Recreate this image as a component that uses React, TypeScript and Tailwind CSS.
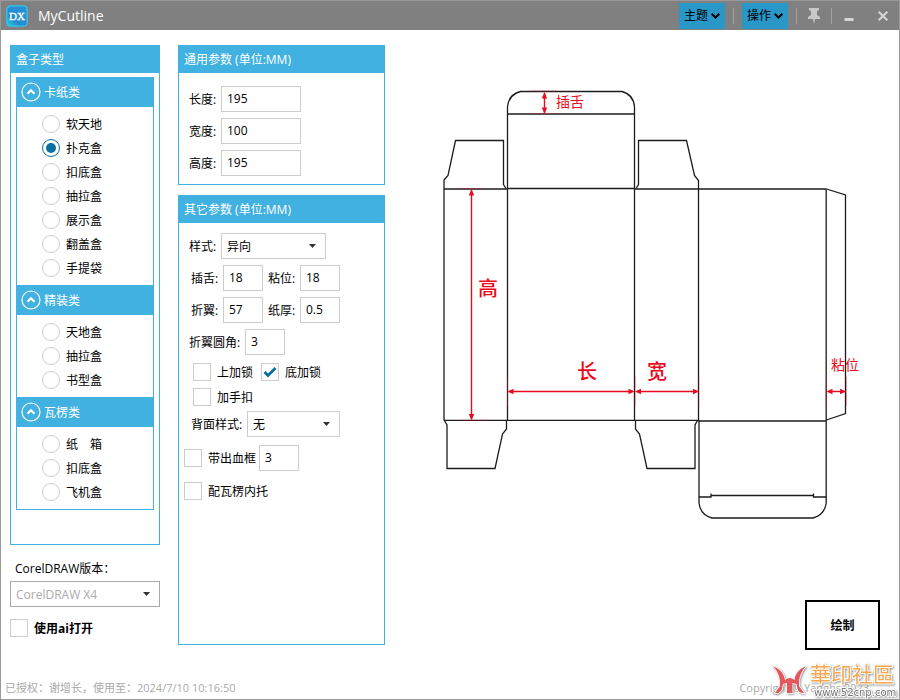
import { useState, type ReactNode } from "react";

const groups = [
  { name: "卡纸类", items: ["软天地", "扑克盒", "扣底盒", "抽拉盒", "展示盒", "翻盖盒", "手提袋"] },
  { name: "精装类", items: ["天地盒", "抽拉盒", "书型盒"] },
  { name: "瓦楞类", items: ["纸　箱", "扣底盒", "飞机盒"] },
];

function Panel({ title, className = "", children }: { title: string; className?: string; children: ReactNode }) {
  return (
    <section className={`border border-[#41b1e1] ${className}`}>
      <h2 className="-mx-px -mt-px flex h-7 items-center bg-[#41b1e1] px-1.5 pt-0.5 text-white">{title}</h2>
      {children}
    </section>
  );
}

function Field({ id, label, value, labelWidth = "w-8", width = "w-10" }: { id: string; label: string; value: string; labelWidth?: string; width?: string }) {
  return (
    <div className="flex items-center">
      <label htmlFor={id} className={`shrink-0 pt-0.5 whitespace-nowrap ${labelWidth}`}>{label}</label>
      <input id={id} defaultValue={value} className={`h-[26px] border border-[#ccc] px-[5px] pb-0.5 outline-none ${width}`} />
    </div>
  );
}

function Select({ id, options, className = "" }: { id: string; options: string[]; className?: string }) {
  return (
    <div className={`grid h-[26px] items-center ${className}`}>
      <select id={id} className="col-start-1 row-start-1 h-[26px] w-full appearance-none border border-inherit bg-white px-[5px] pt-0.5 outline-none">
        {options.map((o) => <option key={o}>{o}</option>)}
      </select>
      <svg className="pointer-events-none col-start-1 row-start-1 mr-2.5 justify-self-end" width="7" height="4" viewBox="0 0 7 4">
        <path d="M0 0H7L3.5 4Z" fill="#333" />
      </svg>
    </div>
  );
}

function Check({ label, checked = false, bold = false }: { label: string; checked?: boolean; bold?: boolean }) {
  return (
    <label className={`flex items-center gap-1.5 whitespace-nowrap ${bold ? "font-bold" : ""}`}>
      <span className="grid">
        <input type="checkbox" defaultChecked={checked} className="peer col-start-1 row-start-1 size-[18px] appearance-none border border-[#ccc] bg-white" />
        <svg className="pointer-events-none invisible col-start-1 row-start-1 peer-checked:visible" width="18" height="18" viewBox="0 0 18 18">
          <path d="M3.5 9L7 12.500L14.500 5" fill="none" stroke="#086f9e" strokeWidth="2.800" />
        </svg>
      </span>
      <span className="pt-0.5">{label}</span>
    </label>
  );
}

function BoxGroup({ name, items }: { name: string; items: string[] }) {
  const [open, setOpen] = useState(true);
  return (
    <div>
      <button type="button" onClick={() => setOpen(!open)} className="flex h-[30px] w-full items-center gap-[3px] bg-[#41b1e1] px-1 text-white">
        <svg width="20" height="20" viewBox="0 0 20 20" fill="none" stroke="white">
          <circle cx="10" cy="10" r="9" strokeWidth="1.2" />
          <path d="M6.5 11.7L10 8.2L13.5 11.7" strokeWidth="2.2" />
        </svg>
        <span className="pt-0.5">{name}</span>
      </button>
      {open && (
        <div className="py-[5px] pl-[25px]">
          {items.map((item) => (
            <label key={item} className="flex h-6 items-center gap-1.5">
              <input
                type="radio"
                name="box"
                defaultChecked={item === "扑克盒"}
                className="grid size-[18px] appearance-none place-items-center rounded-full border border-[#ccc] before:size-2.5 before:rounded-full checked:border-[#086f9e] checked:before:bg-[#086f9e]"
              />
              <span className="pt-0.5">{item}</span>
            </label>
          ))}
        </div>
      )}
    </div>
  );
}

function Arrow({ d, heads }: { d: string; heads: string }) {
  return (
    <>
      <path d={d} stroke="#ea0a20" fill="none" strokeWidth="1.4" />
      <path d={heads} fill="#ea0a20" />
    </>
  );
}

function Diagram() {
  return (
    <svg width="424" height="434" viewBox="440 88 424 434" role="img" aria-label="扑克盒">
      <g fill="none" stroke="#1c1c1c" strokeWidth="1.3">
        <path d="M507.500 188.500V107Q508.500 94.500 520.500 91.500H622Q633.500 94.500 634.500 107V188.500" />
        <path d="M507.500 114H634.500" />
        <path d="M444 420V180L448 175.500L455.500 140.500H503.500V184.500L506 188.500" />
        <path d="M636 188.500L638.500 184.500V140.500H686.500L694.500 175.500L698.500 180.500V420" />
        <path d="M444 189H507.500M507.500 188.500H634.500M634.500 189H826.500M826.200 189V503Q824.500 515 813 518H712Q700.500 515 699 503V420" />
        <path d="M507.500 189V420M634.500 189V420M444 420.300H698.500M698.500 421H826" />
        <path d="M826.500 189L845.500 195V413.500L826.500 420" />
        <path d="M444 420L447 425V468.500H495L502.500 434L506.500 429V420" />
        <path d="M635.500 420V429L639.500 434L647 468.500H695V425L697.500 420.500" />
        <path d="M699 497H711V493.500M711 495.500H813.500M813.500 493.500V497H826.500" />
      </g>
      <path d="M531 91H557M531 113.500H557M458 188.500H484M461 420.300H488M507.500 377V406M635.200 376V406M698.800 377V406M826.200 377V406M846.500 377V406" stroke="#ea0a20" strokeOpacity=".45" strokeWidth=".7" fill="none" />
      <Arrow d="M544.500 93V113" heads="M544.500 92L541.800 98.500H547.200ZM544.500 114L541.800 107.500H547.200Z" />
      <Arrow d="M471.500 190V419" heads="M471.500 189L468.800 195.500H474.200ZM471.500 420.500L468.800 414H474.200Z" />
      <Arrow d="M509 391.500H633" heads="M507.500 391.500L513.500 388.800V394.200ZM634.500 391.500L628.500 388.800V394.200Z" />
      <Arrow d="M637 391.500H697" heads="M635 391.500L641 388.800V394.200ZM699 391.500L693 388.800V394.200Z" />
      <Arrow d="M828 391.500H844" heads="M826.500 391.500L832.500 388.800V394.200ZM846 391.500L840 388.800V394.200Z" />
      <g fill="#ea0a20" textAnchor="middle">
        <text x="570" y="107" fontSize="14">插舌</text>
        <text x="845" y="370" fontSize="14">粘位</text>
        <text x="488" y="296" fontSize="20" className="font-medium">高</text>
        <text x="587" y="379" fontSize="20" className="font-medium">长</text>
        <text x="657" y="379" fontSize="20" className="font-medium">宽</text>
      </g>
    </svg>
  );
}

function Watermark() {
  return (
    <div className="pointer-events-none absolute right-0 bottom-0">
      <svg width="130" height="38" viewBox="770 662 130 38">
        <g fill="#e4575b" stroke="white" strokeWidth="1.500" paintOrder="stroke" className="drop-shadow-[1px_1px_1px_#999]">
          <path d="M774 667Q785 672 786 681Q790.500 677 795.500 681Q796 672 807 667Q799 676 800 687L805 694Q800 694.500 798.500 690L797.500 685L793.500 684V694H788V684L784 685L783 690Q781 695 776 694L781 687Q782 676 774 667Z" />
        </g>
        <g stroke="white" strokeWidth="2" strokeLinejoin="round" paintOrder="stroke" className="drop-shadow-[1px_1px_1px_#999]">
          <text x="811" y="683" fontSize="21" fill="#f6a74f">華印社區</text>
          <text x="815" y="697" fontSize="10" fill="#777" className="font-['DejaVu_Sans',sans-serif]">www.52cnp.com</text>
        </g>
      </svg>
    </div>
  );
}

function MenuButton({ label }: { label: string }) {
  return (
    <button type="button" className="flex h-[26px] items-center gap-[3px] bg-[#2a97c9] px-[5px] text-black">
      {label}
      <svg width="9" height="6" viewBox="0 0 9 6"><path d="M.7.7L4.500 4.500L8.300.7" fill="none" stroke="black" strokeWidth="2" /></svg>
    </button>
  );
}

export default function App() {
  return (
    <div className="relative flex min-h-screen flex-col border border-[#999] bg-white font-['Open_Sans','Noto_Sans_CJK_SC',sans-serif] text-xs leading-4 text-black">
      <header className="flex h-[29px] items-center bg-[#808080] pr-[7px] pl-[5px]">
        <svg width="22" height="22" viewBox="0 0 22 22">
          <defs>
            <linearGradient id="logo" x1="0" y1="1" x2="1" y2="0">
              <stop stopColor="#20d3e0" />
              <stop offset=".35" stopColor="#258bd0" />
              <stop offset="1" stopColor="#2596d6" />
            </linearGradient>
          </defs>
          <rect x=".8" y=".8" width="20.400" height="20.400" rx="4" fill="url(#logo)" stroke="#35c5ee" strokeWidth="1.300" />
          <text x="11" y="15" textAnchor="middle" fontSize="11" fill="white" stroke="white" strokeWidth=".3" className="font-['Liberation_Serif',serif]">DX</text>
        </svg>
        <h1 className="ml-2.5 text-sm text-white">MyCutline</h1>
        <div className="ml-auto flex items-center">
          <MenuButton label="主题" />
          <span className="mx-2 h-4 w-px bg-[#a3a3a3]" />
          <MenuButton label="操作" />
          <span className="mx-2 h-4 w-px bg-[#a3a3a3]" />
          <button type="button" aria-label="置顶" className="px-[3px]">
            <svg width="12" height="16" viewBox="0 0 12 16" fill="#c8c8c8">
              <path d="M1 0H11V2L9 3V7L12 9V11H7L6 16L5 11H0V9L3 7V3L1 2Z" />
            </svg>
          </button>
          <span className="mx-2 h-4 w-px bg-[#a3a3a3]" />
          <button type="button" aria-label="最小化" className="px-1">
            <svg width="10" height="12" viewBox="0 0 10 12"><path d="M0.500 8H9.500V11H0.500Z" fill="#d6d6d6" /></svg>
          </button>
          <button type="button" aria-label="关闭" className="ml-4 px-1">
            <svg width="10" height="10" viewBox="0 0 10 10"><path d="M.7.7L9.300 9.300M9.300.7L.7 9.300" stroke="#d6d6d6" strokeWidth="2" /></svg>
          </button>
        </div>
      </header>

      <main className="flex grow gap-[18px] pt-[15px] pr-[19px] pl-[9px]">
        <div className="flex w-[150px] shrink-0 flex-col">
          <Panel title="盒子类型" className="pb-[34px]">
            <div className="mx-[5px] mt-1 border-x border-b border-[#41b1e1]">
              {groups.map((g) => <BoxGroup key={g.name} {...g} />)}
            </div>
          </Panel>
          <label htmlFor="version" className="mt-4 pl-[5px]">CorelDRAW版本：</label>
          <Select id="version" options={["CorelDRAW X4"]} className="mt-1 border-[#aaa] text-[#aaa]" />
          <div className="mt-3"><Check label="使用ai打开" bold /></div>
        </div>

        <div className="flex w-[207px] shrink-0 flex-col gap-2.5">
          <Panel title="通用参数 (单位:MM)">
            <div className="flex flex-col gap-1.5 pt-[13px] pb-2 pl-2.5">
              <Field id="length" label="长度:" value="195" width="w-20" />
              <Field id="width" label="宽度:" value="100" width="w-20" />
              <Field id="height" label="高度:" value="195" width="w-20" />
            </div>
          </Panel>
          <Panel title="其它参数 (单位:MM)" className="h-[450px]">
            <div className="flex flex-col gap-1.5 pt-2.5 pl-2.5">
              <div className="flex items-center">
                <label htmlFor="style" className="w-8 pt-0.5">样式:</label>
                <Select id="style" options={["异向", "同向"]} className="w-[105px] border-[#ccc]" />
              </div>
              <div className="flex gap-[5px] pl-0.5">
                <Field id="tuck" label="插舌:" value="18" />
                <Field id="glue" label="粘位:" value="18" />
              </div>
              <div className="flex gap-[5px] pl-0.5">
                <Field id="flap" label="折翼:" value="57" />
                <Field id="thickness" label="纸厚:" value="0.5" />
              </div>
              <Field id="radius" label="折翼圆角:" value="3" labelWidth="w-14" />
            </div>
            <div className="mt-2 flex flex-col gap-[7px] pl-3.5">
              <div className="flex gap-2">
                <Check label="上加锁" />
                <Check label="底加锁" checked />
              </div>
              <Check label="加手扣" />
            </div>
            <div className="mt-[5px] flex items-center pl-3">
              <label htmlFor="back" className="w-14 pt-0.5">背面样式:</label>
              <Select id="back" options={["无"]} className="w-[93px] border-[#ccc]" />
            </div>
            <div className="mt-2 flex items-center gap-[3px] pl-[5px]">
              <Check label="带出血框" />
              <input aria-label="出血" defaultValue="3" className="h-[26px] w-10 border border-[#ccc] px-[5px] pb-0.5 outline-none" />
            </div>
            <div className="mt-[11px] pl-[5px]"><Check label="配瓦楞内托" /></div>
          </Panel>
        </div>

        <div className="flex grow flex-col pt-[43px] pl-[37px]">
          <Diagram />
          <button type="button" className="mt-[78px] h-[50px] w-[75px] self-end border-2 border-black bg-white pt-0.5 font-bold">绘制</button>
        </div>
      </main>

      <footer className="flex justify-between pr-[26px] pb-[3px] pl-1 text-[11px] text-[#aaa]">
        <p>已授权：谢增长，使用至：2024/7/10 10:16:50</p>
        <p className="pr-1">Copyright © Yanghs 2023</p>
      </footer>
      <Watermark />
    </div>
  );
}
